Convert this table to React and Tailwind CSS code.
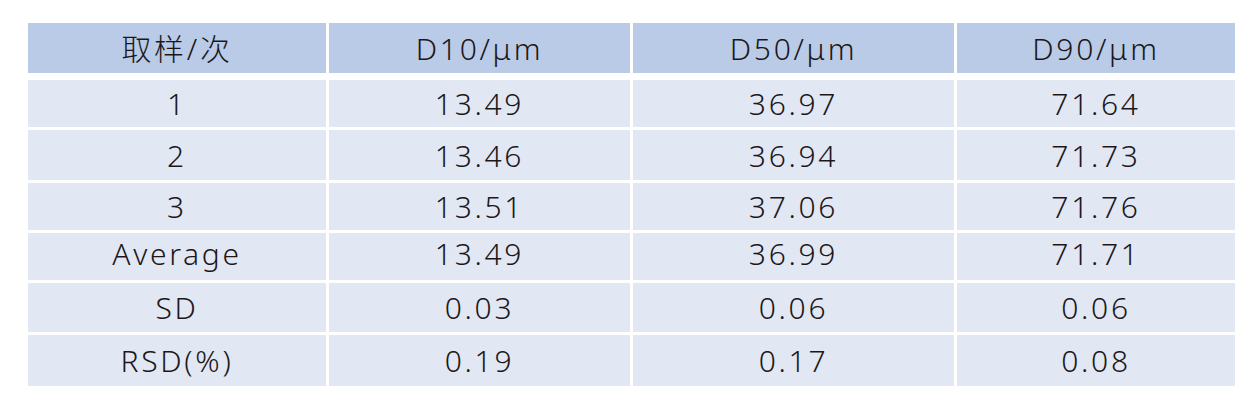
const header = ['取样/次', 'D10/μm', 'D50/μm', 'D90/μm']

const rows = [
  { h: 'h-[47px]', cells: ['1', '13.49', '36.97', '71.64'] },
  { h: 'h-[50px]', cells: ['2', '13.46', '36.94', '71.73'] },
  { h: 'h-[47px]', cells: ['3', '13.51', '37.06', '71.76'] },
  { h: 'h-[47px] pb-[6px]', cells: ['Average', '13.49', '36.99', '71.71'] },
  { h: 'h-[49px]', cells: ['SD', '0.03', '0.06', '0.06'] },
  { h: 'h-[51px]', cells: ['RSD(%)', '0.19', '0.17', '0.08'] },
]

const cols = 'grid grid-cols-[298px_301px_321px_278px] gap-x-[3px]'

export default function App() {
  return (
    <div
      className="h-[416px] w-[1260px] bg-white pl-[28px] pt-[23px] text-[#1c1819]"
      style={{ fontFamily: '"Noto Sans", "Noto Sans CJK SC", sans-serif' }}
    >
      {/* 表头 */}
      <div className={`${cols} h-[50px]`}>
        {header.map((t) => (
          <div key={t} className="flex items-center justify-center bg-[#bacbe8] text-[30px] font-light tracking-[0.09em]">
            {t}
          </div>
        ))}
      </div>

      <div className="mt-[7px] flex flex-col gap-y-[3px]">
        {rows.map((row, i) => (
          <div key={i} className={`${cols} h-auto`}>
            {row.cells.map((c, j) => (
              <div key={j} className={`flex items-center justify-center bg-[#e2e7f4] text-[30px] font-light tracking-[0.09em] ${row.h}`}>
                {c}
              </div>
            ))}
          </div>
        ))}
      </div>
    </div>
  )
}
